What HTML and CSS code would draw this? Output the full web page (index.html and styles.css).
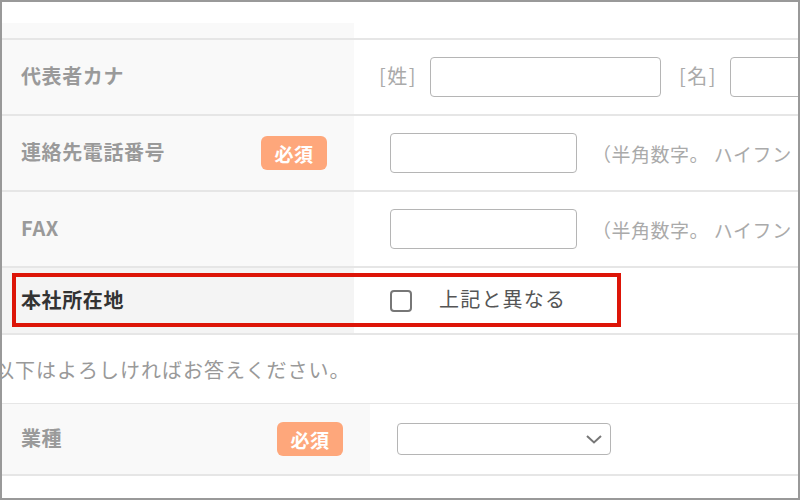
FILE: index.html
```html
<!DOCTYPE html>
<html lang="ja">
<head>
<meta charset="utf-8">
<link rel="stylesheet" href="styles.css">
</head>
<body>
<div class="frame">
  <div class="row row--stub">
    <div class="label"></div>
    <div class="value"></div>
  </div>
  <div class="row">
    <div class="label"><span class="label-text">代表者カナ</span></div>
    <div class="value value--name">
      <span class="bracket">[姓]</span>
      <span class="input input--name"></span>
      <span class="bracket bracket--second">[名]</span>
      <span class="input input--name"></span>
    </div>
  </div>
  <div class="row">
    <div class="label"><span class="label-text">連絡先電話番号</span><span class="badge">必須</span></div>
    <div class="value">
      <span class="input input--tel"></span>
      <span class="hint">（半角数字。 ハイフン</span>
    </div>
  </div>
  <div class="row">
    <div class="label"><span class="label-text">FAX</span></div>
    <div class="value">
      <span class="input input--tel"></span>
      <span class="hint">（半角数字。 ハイフン</span>
    </div>
  </div>
  <div class="row row--active">
    <div class="label"><span class="label-text">本社所在地</span></div>
    <div class="value">
      <span class="checkbox"></span>
      <span class="check-text">上記と異なる</span>
    </div>
  </div>
  <div class="note"><span class="note-text">以下はよろしければお答えください。</span></div>
  <div class="row row--wide">
    <div class="label"><span class="label-text">業種</span><span class="badge">必須</span></div>
    <div class="value value--select">
      <div class="select">
        <svg class="chevron" width="16" height="9" viewBox="0 0 16 9"><path d="M1 1 L8 7.5 L15 1" fill="none" stroke="#777" stroke-width="2"/></svg>
      </div>
    </div>
  </div>
  <div class="highlight"></div>
</div>
</body>
</html>
```

FILE: styles.css
```css
html, body {
  margin: 0;
  padding: 0;
  background: #fff;
}

body {
  font-family: "Noto Sans CJK JP", "Noto Sans", sans-serif;
}

.frame {
  position: relative;
  width: 800px;
  height: 500px;
  box-sizing: border-box;
  border: 2px solid #999;
  overflow: hidden;
  padding-top: 21px;
  background: #fff;
}

.row {
  display: flex;
  height: 74px;
  border-bottom: 2px solid #e6e6e6;
}

.row--stub {
  height: 15px;
}

.row--active {
  height: 65px;
}

.row--wide {
  height: 70px;
}

.label {
  width: 352px;
  flex: none;
  box-sizing: border-box;
  background: #f9f9f9;
  display: flex;
  align-items: center;
  justify-content: space-between;
  padding: 0 27px 0 19px;
}

.row--active .label {
  background: #f4f4f4;
}

.row--wide .label {
  width: 368px;
}

.label-text {
  font-size: 20px;
  font-weight: 700;
  color: #9a9a9a;
  letter-spacing: 0.6px;
  margin-top: -4px;
}

.row--active .label-text {
  color: #333;
  margin-top: -2px;
}

.badge {
  width: 66px;
  height: 34px;
  border-radius: 6px;
  background: #fea77b;
  color: #fff;
  font-size: 19px;
  font-weight: 700;
  display: flex;
  align-items: center;
  justify-content: center;
  letter-spacing: 0.5px;
}

.value {
  flex: 1;
  display: flex;
  align-items: center;
  padding-left: 36px;
  white-space: nowrap;
  min-width: 0;
}

.value--name {
  padding-left: 25px;
}

.value--select {
  padding-left: 27px;
}

.bracket {
  font-size: 20px;
  color: #aaa;
  letter-spacing: 1.5px;
  margin-right: 13px;
  margin-top: -3px;
}

.bracket--second {
  margin-left: 18px;
}

.input {
  flex: none;
  display: block;
  box-sizing: border-box;
  border: 1px solid #b5b5b5;
  border-radius: 4px;
  background: #fff;
}

.input--name {
  width: 231px;
  height: 40px;
}

.input--tel {
  width: 187px;
  height: 40px;
}

.hint {
  font-size: 19px;
  color: #aaa;
  margin-left: 15px;
  letter-spacing: 0.5px;
}

.checkbox {
  flex: none;
  width: 22px;
  height: 22px;
  box-sizing: border-box;
  border: 2px solid #777;
  border-radius: 4px;
  background: #fff;
}

.check-text {
  font-size: 20px;
  color: #555;
  margin-left: 27px;
  letter-spacing: 1.2px;
  margin-top: -4px;
}

.note {
  height: 68px;
  border-bottom: 1px solid #e6e6e6;
  display: flex;
  align-items: center;
}

.note-text {
  font-size: 20px;
  color: #999;
  margin-left: -8px;
  letter-spacing: 1px;
  white-space: nowrap;
}

.select {
  width: 214px;
  height: 32px;
  box-sizing: border-box;
  border: 1px solid #b5b5b5;
  border-radius: 4px;
  display: flex;
  align-items: center;
  justify-content: flex-end;
  padding-right: 8px;
}

.chevron {
  display: block;
}

.highlight {
  position: absolute;
  left: 10px;
  top: 271px;
  width: 609px;
  height: 54px;
  box-sizing: border-box;
  border: 4px solid #dd1508;
}
```
